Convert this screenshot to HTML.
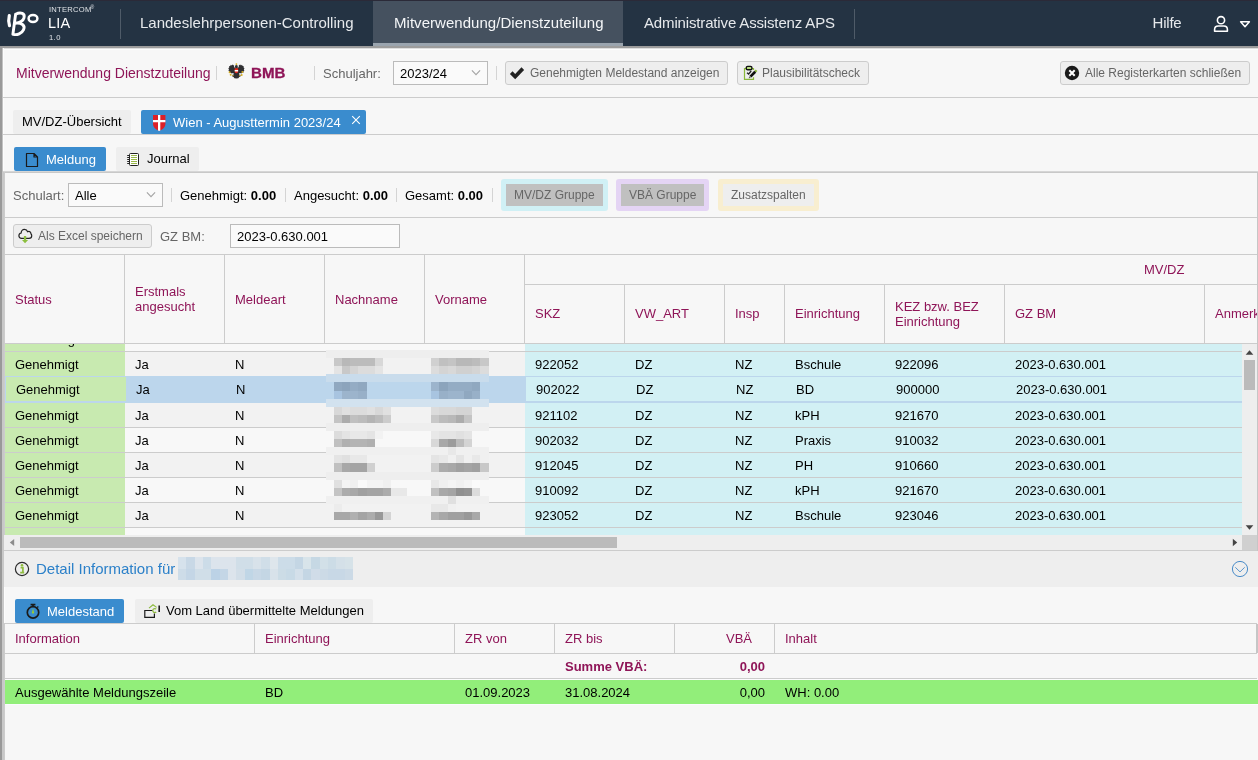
<!DOCTYPE html>
<html><head><meta charset="utf-8">
<style>
*{box-sizing:border-box;margin:0;padding:0}
html,body{width:1258px;height:760px;overflow:hidden;background:#f7f7f7;font-family:"Liberation Sans",sans-serif;font-size:13px;color:#000}
.a{position:absolute}
.t{position:absolute;white-space:nowrap;line-height:16px}
#hdr{left:0;top:0;width:1258px;height:46px;background:#243343}
.nav{color:#e6e9ec;font-size:15px;top:14px;line-height:18px}
.p{color:#8f1558}
.g{color:#666}
.btn{background:#eee;border:1px solid #ccc;border-radius:3px}
.bt{font-size:12px;color:#666;line-height:14px}
.sep{width:1px;background:#d4d4d4}
.hl{height:1px;background:#ccc;left:4px;width:1253px}
.vl{width:1px;background:#ccc}
.sel{background:#fafafa;border:1px solid #bbb}
.row{left:5px;width:1237px;height:25px}
.c{position:absolute;top:0;height:100%;white-space:nowrap;line-height:24px;font-size:13px}
.bl{position:absolute;filter:blur(1.5px)}
#root{position:absolute;left:0;top:0;width:1258px;height:760px;will-change:transform;overflow:hidden}
</style></head><body><div id="root">
<!-- HEADER -->
<div class="a" id="hdr"></div>
<div class="a" style="left:0;top:0;width:1258px;height:1px;background:#2b2a38"></div>
<div class="a" style="left:373px;top:1px;width:250px;height:45px;background:#45515f"></div>
<div class="a" style="left:373px;top:43px;width:250px;height:3px;background:#9aa4ae"></div>
<div class="a" style="left:0;top:46px;width:1258px;height:2px;background:#9c9c9c"></div>
<div class="a" style="left:2px;top:48px;width:1256px;height:1px;background:#dedede"></div><div class="a" style="left:3px;top:49px;width:1255px;height:1px;background:#fdfdfd"></div>
<div class="a" style="left:0;top:46px;width:2px;height:714px;background:#999"></div>
<div class="a" style="left:2px;top:48px;width:1px;height:712px;background:#c2c2c2"></div>
<div class="a" style="left:3px;top:48px;width:1px;height:123px;background:#fcfcfc"></div>
<div class="a" style="left:120px;top:9px;width:1px;height:30px;background:#4f5b68"></div>
<div class="a" style="left:854px;top:9px;width:1px;height:30px;background:#4f5b68"></div>
<!-- logo -->
<svg class="a" style="left:5px;top:8px" width="36" height="30" viewBox="0 0 36 30">
<g fill="none" stroke="#fff" stroke-linecap="round" stroke-linejoin="round">
<path d="M4.3 7.6 C3.5 10.8 3.5 14 4.5 17.6" stroke-width="3.2"/>
<path d="M10.6 6.2 L7.9 26.2 M10.6 6.2 C16 3.6 20.2 5.6 19 9.8 C18.2 12.6 14.8 14.6 10.4 15.2 C16.4 14.6 20.6 17.2 18.6 21.6 C16.9 25.4 12 27.6 7.9 26.2" stroke-width="2.9"/>
<ellipse cx="28" cy="10.5" rx="4.4" ry="3.5" stroke-width="2.5"/>
</g></svg>
<div class="t" style="left:49px;top:5px;font-size:7.6px;line-height:10px;color:#dfe3e7;letter-spacing:.25px">INTERCOM</div>
<div class="t" style="left:90.5px;top:4px;font-size:5px;line-height:6px;color:#dfe3e7">®</div>
<div class="t" style="left:48px;top:14px;font-size:14.5px;line-height:18px;color:#fff;letter-spacing:.2px">LIA</div>
<div class="t" style="left:49px;top:33px;font-size:7.6px;line-height:10px;color:#dfe3e7;letter-spacing:.4px">1.0</div>
<div class="t nav" id="n1" style="left:140px">Landeslehrpersonen-Controlling</div>
<div class="t nav" id="n2" style="left:394px;color:#f4f6f8;letter-spacing:.04px">Mitverwendung/Dienstzuteilung</div>
<div class="t nav" id="n3" style="left:644px;letter-spacing:-.15px">Administrative Assistenz APS</div>
<div class="t nav" id="n4" style="left:1152.5px;letter-spacing:-.2px">Hilfe</div>
<svg class="a" style="left:1213px;top:15px" width="16" height="18" viewBox="0 0 16 18"><g fill="none" stroke="#fff" stroke-width="1.6"><circle cx="8" cy="5.2" r="3.6"/><path d="M1.6 16.2 V14.5 C1.6 12.3 3.2 11 5.2 11 H10.8 C12.8 11 14.4 12.3 14.4 14.5 V16.2 Z" stroke-linejoin="round"/></g></svg>
<svg class="a" style="left:1239px;top:20px" width="12" height="9" viewBox="0 0 12 9"><path d="M1.6 1.8 H10.4 L6 6.8 Z" fill="none" stroke="#fff" stroke-width="1.5" stroke-linejoin="round"/></svg>

<!-- TOOLBAR 1 -->
<div class="t p" style="left:16px;top:64px;font-size:14px;line-height:18px">Mitverwendung Dienstzuteilung</div>
<div class="a sep" style="left:216px;top:66px;height:14px"></div>
<svg class="a" style="left:227.5px;top:62.5px;filter:blur(.4px)" width="17" height="16" viewBox="0 0 17 16">
<path d="M8.4 2 L9.6 2.4 L10.2 4 L11 2.2 L12.2 1.6 L13 2.4 L14 1.8 L14.6 3 L15.6 3 L15.6 4.4 L16.5 5.2 L15.8 6.4 L16.4 7.6 L15.4 8.4 L15.6 9.6 L14.2 9.8 L13.4 10.6 L12.4 10 L11.6 11.2 L12.8 12.4 L12.4 13.6 L11.2 14 L10.4 15.2 L8.4 15.6 L6.4 15.2 L5.6 14 L4.4 13.6 L4 12.4 L5.2 11.2 L4.4 10 L3.4 10.6 L2.6 9.8 L1.2 9.6 L1.4 8.4 L.4 7.6 L1 6.4 L.3 5.2 L1.2 4.4 L1.2 3 L2.2 3 L2.8 1.8 L3.8 2.4 L4.6 1.6 L5.8 2.2 L6.6 4 L7.2 2.4Z" fill="#303032"/>
<path d="M6.3 2.4 L6.8 4.6 M10.5 2.4 L10 4.6" stroke="#e4e4e4" stroke-width="1"/>
<path d="M5.4 10.2 L4.4 12.2 M11.4 10.2 L12.4 12.2" stroke="#d8dce4" stroke-width="1.2"/>
<path d="M6.7 5.2 H10.1 V8.4 C10.1 9.4 9.3 10 8.4 10.3 C7.5 10 6.7 9.4 6.7 8.4Z" fill="#ee2a1e"/>
<rect x="6.7" y="7" width="3.4" height="1.5" fill="#fff"/>
<circle cx="8.4" cy="1.1" r=".9" fill="#d4ac20"/>
<circle cx="1.6" cy="9.2" r="1" fill="#d4ac20"/><circle cx="14.4" cy="8.9" r="1" fill="#d4ac20"/>
<circle cx="2.7" cy="11.8" r="1" fill="#d4ac20"/><circle cx="13.7" cy="12" r="1" fill="#d4ac20"/>
<circle cx="5" cy="12.6" r=".7" fill="#d4ac20"/><circle cx="11.8" cy="12.6" r=".7" fill="#d4ac20"/>
</svg>
<div class="t p" id="bmb" style="left:251px;top:64px;font-size:14px;line-height:18px;font-weight:bold;transform-origin:0 50%;transform:scaleX(1.08);-webkit-text-stroke:.3px #8f1558">BMB</div>
<div class="a sep" style="left:314px;top:66px;height:14px"></div>
<div class="t g" style="left:323px;top:66px;font-size:13px">Schuljahr:</div>
<div class="a sel" style="left:393px;top:61px;width:95px;height:24px"></div>
<div class="t" style="left:400px;top:66px;font-size:13px">2023/24</div>
<svg class="a" style="left:470px;top:68px" width="12" height="8" viewBox="0 0 12 8"><path d="M1.9 2.3 L6 6.6 L10.1 2.3" fill="none" stroke="#a4a4a4" stroke-width="1.1"/></svg>
<div class="a sep" style="left:496px;top:66px;height:14px"></div>
<div class="a btn" style="left:505px;top:61px;width:223px;height:24px"></div>
<svg class="a" style="left:509px;top:66px" width="16" height="14" viewBox="0 0 16 14"><path d="M.9 7.9 L3.5 5.3 L6.2 8 L12.5 1.3 L15.1 3.9 L6.2 13.3 Z" fill="#222"/></svg>
<div class="t bt" style="left:530px;top:66px">Genehmigten Meldestand anzeigen</div>
<div class="a btn" style="left:737px;top:61px;width:132px;height:24px"></div>
<svg class="a" style="left:743px;top:65px" width="15" height="16" viewBox="0 0 15 16">
<path d="M3.4 3.6 H1.5 V14.4 H10.5 V12.2 M8.6 3.6 H10.5 V5" fill="none" stroke="#8ab83a" stroke-width="1.2"/>
<rect x="3.3" y="1.4" width="5.6" height="3.3" rx="1.3" fill="#b8dc80" stroke="#111" stroke-width="1.4"/>
<path d="M4 7.7 L5.6 9 L8.2 6" fill="none" stroke="#222" stroke-width="1.3"/>
<path d="M12 6.9 L13.6 5.3" stroke="#8ab83a" stroke-width="2.2"/>
<path d="M7.4 11.6 L12.2 6.8" stroke="#111" stroke-width="2.7"/>
<path d="M5.8 13.2 L6.2 11.2 L7.8 12.8Z" fill="#111"/><circle cx="6.9" cy="12.1" r=".6" fill="#ddd"/>
</svg>
<div class="t bt" style="left:762px;top:66px">Plausibilitätscheck</div>
<div class="a btn" style="left:1060px;top:61px;width:190px;height:24px"></div>
<svg class="a" style="left:1064px;top:65px" width="16" height="16" viewBox="0 0 16 16"><circle cx="8" cy="8" r="7.2" fill="#1a1a1a"/><path d="M5.3 5.3 L10.7 10.7 M10.7 5.3 L5.3 10.7" stroke="#fff" stroke-width="2" stroke-linecap="butt"/></svg>
<div class="t bt" style="left:1085px;top:66px">Alle Registerkarten schließen</div>
<div class="a" style="left:3px;top:97px;width:1255px;height:1px;background:#ccc"></div>

<!-- TABS 1 -->
<div class="a" style="left:13px;top:110px;width:118px;height:24px;background:#eee;border-radius:2px"></div>
<div class="t" style="left:22px;top:114px;font-size:13px">MV/DZ-Übersicht</div>
<div class="a" style="left:141px;top:110px;width:225px;height:24px;background:#3a8cce;border-radius:2px"></div>
<svg class="a" style="left:152px;top:114px" width="14" height="18" viewBox="0 0 14 18"><path d="M1 1 H13.4 V9.5 C13.4 13.5 10.5 15.6 7.2 16.9 C3.9 15.6 1 13.5 1 9.5Z" fill="#dc2028"/><path d="M6 1 H8.3 V16.4 L7.2 16.9 L6 16.4Z M1 5.9 H13.4 V8.3 H1Z" fill="#fff"/></svg>
<div class="t" style="left:173px;top:115px;font-size:13px;color:#fff">Wien - Augusttermin 2023/24</div>
<svg class="a" style="left:351px;top:115px" width="10" height="10" viewBox="0 0 10 10"><path d="M1.2 1.2 L8.8 8.8 M8.8 1.2 L1.2 8.8" stroke="#fff" stroke-width="1.1"/></svg>
<div class="a" style="left:3px;top:134px;width:1255px;height:1px;background:#ccc"></div>

<!-- TABS 2 -->
<div class="a" style="left:14px;top:147px;width:92px;height:24px;background:#3a8cce;border-radius:2px"></div>
<svg class="a" style="left:25px;top:152px" width="14" height="16" viewBox="0 0 14 16"><path d="M1.5 1.5 H9 L12.5 5 V14.5 H1.5 Z M9 1.5 V5 H12.5" fill="none" stroke="#1a1a1a" stroke-width="1.2" stroke-linejoin="round"/></svg>
<div class="t" style="left:46px;top:152px;font-size:13px;color:#fff">Meldung</div>
<div class="a" style="left:116px;top:147px;width:83px;height:24px;background:#eee;border-radius:2px"></div>
<svg class="a" style="left:126px;top:152px" width="14" height="15" viewBox="0 0 14 15"><rect x="3.5" y="1.5" width="9" height="12" rx="1" fill="#fff" stroke="#222" stroke-width="1"/><path d="M5 3.5 H11 M5 5.5 H11 M5 7.5 H11 M5 9.5 H11 M5 11.5 H11" stroke="#9ab84a" stroke-width="1"/><path d="M1.2 3.5 H4 M1.2 5.5 H4 M1.2 7.5 H4 M1.2 9.5 H4 M1.2 11.5 H4" stroke="#222" stroke-width="1"/></svg>
<div class="t" style="left:147px;top:151px;font-size:13px">Journal</div>
<div class="a" style="left:3px;top:171px;width:1255px;height:1px;background:#d6d6d6"></div><div class="a" style="left:3px;top:172px;width:1255px;height:1px;background:#c8c8c8"></div>
<div class="a" style="left:2px;top:172px;width:2px;height:588px;background:#c8c8c8"></div><div class="a" style="left:4px;top:172px;width:1px;height:363px;background:#ccc"></div><div class="a" style="left:4px;top:587px;width:1px;height:36px;background:#fcfcfc"></div><div class="a" style="left:4px;top:623px;width:1px;height:137px;background:#ccc"></div>

<!-- FILTER ROW -->
<div class="t g" style="left:13px;top:188px">Schulart:</div>
<div class="a sel" style="left:68px;top:183px;width:95px;height:24px"></div>
<div class="t" style="left:75px;top:188px">Alle</div>
<svg class="a" style="left:145px;top:190px" width="12" height="8" viewBox="0 0 12 8"><path d="M1.9 2.3 L6 6.6 L10.1 2.3" fill="none" stroke="#a4a4a4" stroke-width="1.1"/></svg>
<div class="a sep" style="left:171px;top:188px;height:14px"></div>
<div class="t" style="left:180px;top:188px">Genehmigt: <b>0.00</b></div>
<div class="a sep" style="left:285px;top:188px;height:14px"></div>
<div class="t" style="left:294px;top:188px">Angesucht: <b>0.00</b></div>
<div class="a sep" style="left:396px;top:188px;height:14px"></div>
<div class="t" style="left:405px;top:188px">Gesamt: <b>0.00</b></div>
<div class="a sep" style="left:492px;top:188px;height:14px"></div>
<div class="a" style="left:501px;top:179px;width:107px;height:32px;background:#c0c0c0;border:5px solid #d0f0f5;border-radius:3px"></div>
<div class="t bt" style="left:514px;top:188px">MV/DZ Gruppe</div>
<div class="a" style="left:616px;top:179px;width:93px;height:32px;background:#c0c0c0;border:5px solid #e4d4f4;border-radius:3px"></div>
<div class="t bt" style="left:629px;top:188px">VBÄ Gruppe</div>
<div class="a" style="left:718px;top:179px;width:101px;height:32px;background:#eee;border:5px solid #f8eed0;border-radius:3px"></div>
<div class="t bt" style="left:731px;top:188px">Zusatzspalten</div>
<div class="a hl" style="top:217px"></div>

<!-- EXCEL ROW -->
<div class="a btn" style="left:13px;top:224px;width:139px;height:24px"></div>
<svg class="a" style="left:17px;top:228px" width="17" height="16" viewBox="0 0 17 16"><path d="M4 10.5 C2.2 10.5 1.1 9.2 1.1 7.7 C1.1 6.1 2.2 5 3.6 4.8 C3.6 2.6 5.2 1 7.2 1 C8.9 1 10.2 2 10.7 3.4 C11.1 3.2 11.5 3.1 11.9 3.1 C13.4 3.1 14.4 4.2 14.3 5.5 C14.9 6 15.2 6.8 15.2 7.7 C15.2 9.3 13.9 10.5 12.2 10.5 Z" fill="none" stroke="#222" stroke-width="1.3" transform="translate(.9 .45) scale(.91 .95)"/><path d="M6.9 7.9 H9.2 V11.9 H11.1 L8.05 15.2 L5 11.9 H6.9Z" fill="#8cbf3f"/></svg>
<div class="t bt" style="left:38px;top:229px">Als Excel speichern</div>
<div class="t g" style="left:160px;top:229px">GZ BM:</div>
<div class="a sel" style="left:230px;top:224px;width:170px;height:24px"></div>
<div class="t" style="left:237px;top:229px">2023-0.630.001</div>

<!-- GRID HEADER -->
<div class="a hl" style="top:254px"></div>
<div class="a vl" style="left:124px;top:255px;height:88px"></div>
<div class="a vl" style="left:224px;top:255px;height:88px"></div>
<div class="a vl" style="left:324px;top:255px;height:88px"></div>
<div class="a vl" style="left:424px;top:255px;height:88px"></div>
<div class="a vl" style="left:524px;top:255px;height:88px"></div>
<div class="a" style="left:525px;top:284px;width:733px;height:1px;background:#ccc"></div>
<div class="a vl" style="left:624px;top:285px;height:58px"></div>
<div class="a vl" style="left:724px;top:285px;height:58px"></div>
<div class="a vl" style="left:784px;top:285px;height:58px"></div>
<div class="a vl" style="left:884px;top:285px;height:58px"></div>
<div class="a vl" style="left:1004px;top:285px;height:58px"></div>
<div class="a vl" style="left:1204px;top:285px;height:58px"></div>

<div class="t p" style="left:15px;top:292px">Status</div>
<div class="t p" style="left:135px;top:284px;line-height:15px">Erstmals<br>angesucht</div>
<div class="t p" style="left:235px;top:292px">Meldeart</div>
<div class="t p" style="left:335px;top:292px">Nachname</div>
<div class="t p" style="left:435px;top:292px">Vorname</div>
<div class="t p" style="left:1144px;top:262px">MV/DZ</div>
<div class="t p" style="left:535px;top:306px">SKZ</div>
<div class="t p" style="left:635px;top:306px">VW_ART</div>
<div class="t p" style="left:735px;top:306px">Insp</div>
<div class="t p" style="left:795px;top:306px">Einrichtung</div>
<div class="t p" style="left:895px;top:299px;line-height:15px">KEZ bzw. BEZ<br>Einrichtung</div>
<div class="t p" style="left:1015px;top:306px">GZ BM</div>
<div class="t p" style="left:1215px;top:306px;width:43px;overflow:hidden">Anmerkung</div>
<div class="a" style="left:4px;top:343px;width:1253px;height:1px;background:#ccc"></div>

<!-- GRID BODY -->
<div id="grid"><div class="a" style="left:5px;top:344px;width:120px;height:191px;background:#c8eab0"></div>
<div class="a" style="left:125px;top:344px;width:400px;height:191px;background:#f8f8f8"></div>
<div class="a" style="left:525px;top:344px;width:717px;height:191px;background:#d2f0f4"></div>
<div class="a" style="left:5px;top:344px;width:120px;height:7px;overflow:hidden"><div class="t" style="left:10px;top:-16px;line-height:24px">Genehmigt</div></div>
<div class="a" style="left:125px;top:352px;width:400px;height:24px;background:#f2f2f2"></div>
<div class="t" style="left:15px;top:353px;line-height:24px">Genehmigt</div>
<div class="t" style="left:135px;top:353px;line-height:24px">Ja</div>
<div class="t" style="left:235px;top:353px;line-height:24px">N</div>
<div class="t" style="left:535px;top:353px;line-height:24px">922052</div>
<div class="t" style="left:635px;top:353px;line-height:24px">DZ</div>
<div class="t" style="left:735px;top:353px;line-height:24px">NZ</div>
<div class="t" style="left:795px;top:353px;line-height:24px">Bschule</div>
<div class="t" style="left:895px;top:353px;line-height:24px">922096</div>
<div class="t" style="left:1015px;top:353px;line-height:24px">2023-0.630.001</div>
<div class="a" style="left:5px;top:376px;width:1237px;height:27px;background:#bcd6ec"></div>
<div class="a" style="left:6px;top:377px;width:120px;height:24px;background:#c8eab0"></div>
<div class="a" style="left:526px;top:377px;width:716px;height:24px;background:#d2f0f4"></div>
<div class="t" style="left:16px;top:377px;line-height:25px">Genehmigt</div>
<div class="t" style="left:136px;top:377px;line-height:25px">Ja</div>
<div class="t" style="left:236px;top:377px;line-height:25px">N</div>
<div class="t" style="left:536px;top:377px;line-height:25px">902022</div>
<div class="t" style="left:636px;top:377px;line-height:25px">DZ</div>
<div class="t" style="left:736px;top:377px;line-height:25px">NZ</div>
<div class="t" style="left:796px;top:377px;line-height:25px">BD</div>
<div class="t" style="left:896px;top:377px;line-height:25px">900000</div>
<div class="t" style="left:1016px;top:377px;line-height:25px">2023-0.630.001</div>
<div class="a" style="left:125px;top:403px;width:400px;height:24px;background:#f2f2f2"></div>
<div class="t" style="left:15px;top:404px;line-height:24px">Genehmigt</div>
<div class="t" style="left:135px;top:404px;line-height:24px">Ja</div>
<div class="t" style="left:235px;top:404px;line-height:24px">N</div>
<div class="t" style="left:535px;top:404px;line-height:24px">921102</div>
<div class="t" style="left:635px;top:404px;line-height:24px">DZ</div>
<div class="t" style="left:735px;top:404px;line-height:24px">NZ</div>
<div class="t" style="left:795px;top:404px;line-height:24px">kPH</div>
<div class="t" style="left:895px;top:404px;line-height:24px">921670</div>
<div class="t" style="left:1015px;top:404px;line-height:24px">2023-0.630.001</div>
<div class="t" style="left:15px;top:429px;line-height:24px">Genehmigt</div>
<div class="t" style="left:135px;top:429px;line-height:24px">Ja</div>
<div class="t" style="left:235px;top:429px;line-height:24px">N</div>
<div class="t" style="left:535px;top:429px;line-height:24px">902032</div>
<div class="t" style="left:635px;top:429px;line-height:24px">DZ</div>
<div class="t" style="left:735px;top:429px;line-height:24px">NZ</div>
<div class="t" style="left:795px;top:429px;line-height:24px">Praxis</div>
<div class="t" style="left:895px;top:429px;line-height:24px">910032</div>
<div class="t" style="left:1015px;top:429px;line-height:24px">2023-0.630.001</div>
<div class="a" style="left:125px;top:453px;width:400px;height:24px;background:#f2f2f2"></div>
<div class="t" style="left:15px;top:454px;line-height:24px">Genehmigt</div>
<div class="t" style="left:135px;top:454px;line-height:24px">Ja</div>
<div class="t" style="left:235px;top:454px;line-height:24px">N</div>
<div class="t" style="left:535px;top:454px;line-height:24px">912045</div>
<div class="t" style="left:635px;top:454px;line-height:24px">DZ</div>
<div class="t" style="left:735px;top:454px;line-height:24px">NZ</div>
<div class="t" style="left:795px;top:454px;line-height:24px">PH</div>
<div class="t" style="left:895px;top:454px;line-height:24px">910660</div>
<div class="t" style="left:1015px;top:454px;line-height:24px">2023-0.630.001</div>
<div class="t" style="left:15px;top:479px;line-height:24px">Genehmigt</div>
<div class="t" style="left:135px;top:479px;line-height:24px">Ja</div>
<div class="t" style="left:235px;top:479px;line-height:24px">N</div>
<div class="t" style="left:535px;top:479px;line-height:24px">910092</div>
<div class="t" style="left:635px;top:479px;line-height:24px">DZ</div>
<div class="t" style="left:735px;top:479px;line-height:24px">NZ</div>
<div class="t" style="left:795px;top:479px;line-height:24px">kPH</div>
<div class="t" style="left:895px;top:479px;line-height:24px">921670</div>
<div class="t" style="left:1015px;top:479px;line-height:24px">2023-0.630.001</div>
<div class="a" style="left:125px;top:503px;width:400px;height:24px;background:#f2f2f2"></div>
<div class="t" style="left:15px;top:504px;line-height:24px">Genehmigt</div>
<div class="t" style="left:135px;top:504px;line-height:24px">Ja</div>
<div class="t" style="left:235px;top:504px;line-height:24px">N</div>
<div class="t" style="left:535px;top:504px;line-height:24px">923052</div>
<div class="t" style="left:635px;top:504px;line-height:24px">DZ</div>
<div class="t" style="left:735px;top:504px;line-height:24px">NZ</div>
<div class="t" style="left:795px;top:504px;line-height:24px">Bschule</div>
<div class="t" style="left:895px;top:504px;line-height:24px">923046</div>
<div class="t" style="left:1015px;top:504px;line-height:24px">2023-0.630.001</div>
<div class="a" style="left:5px;top:351px;width:1237px;height:1px;background:#ccc"></div>
<div class="a" style="left:5px;top:427px;width:1237px;height:1px;background:#ccc"></div>
<div class="a" style="left:5px;top:452px;width:1237px;height:1px;background:#ccc"></div>
<div class="a" style="left:5px;top:477px;width:1237px;height:1px;background:#ccc"></div>
<div class="a" style="left:5px;top:502px;width:1237px;height:1px;background:#ccc"></div>
<div class="a" style="left:5px;top:527px;width:1237px;height:1px;background:#ccc"></div>
<div class="a" style="left:1242px;top:344px;width:16px;height:191px;background:#eee"></div>
<div class="a" style="left:1244px;top:360px;width:11px;height:30px;background:#bbb"></div>
<svg class="a" style="left:1245px;top:349px" width="9" height="7" viewBox="0 0 9 7"><path d="M.7 5.8 H8.3 L4.5 1.3Z" fill="#444"/></svg>
<svg class="a" style="left:1245px;top:524px" width="9" height="7" viewBox="0 0 9 7"><path d="M.7 1.2 H8.3 L4.5 5.7Z" fill="#444"/></svg>
<svg class="a" style="left:326px;top:349.9px" width="163.0" height="170.1" shape-rendering="crispEdges"><rect x="0.0" y="0.0" width="163.2" height="8.3" fill="#eeeeee"/><rect x="0.0" y="8.1" width="8.3" height="8.3" fill="#f2f2f2"/><rect x="8.1" y="8.1" width="8.3" height="8.3" fill="#c8c8c8"/><rect x="16.2" y="8.1" width="8.3" height="8.3" fill="#b8b8b8"/><rect x="24.3" y="8.1" width="24.5" height="8.3" fill="#bcbcbc"/><rect x="48.6" y="8.1" width="8.3" height="8.3" fill="#d8d8d8"/><rect x="56.7" y="8.1" width="48.8" height="8.3" fill="#f2f2f2"/><rect x="105.3" y="8.1" width="8.3" height="8.3" fill="#d0d0d0"/><rect x="113.4" y="8.1" width="8.3" height="8.3" fill="#c0c0c0"/><rect x="121.5" y="8.1" width="8.3" height="8.3" fill="#c4c4c4"/><rect x="129.6" y="8.1" width="16.4" height="8.3" fill="#b8b8b8"/><rect x="145.8" y="8.1" width="8.3" height="8.3" fill="#bcbcbc"/><rect x="153.9" y="8.1" width="9.3" height="8.3" fill="#c8c8c8"/><rect x="0.0" y="16.2" width="8.3" height="8.3" fill="#f2f2f2"/><rect x="8.1" y="16.2" width="8.3" height="8.3" fill="#e4e4e4"/><rect x="16.2" y="16.2" width="8.3" height="8.3" fill="#c8c8c8"/><rect x="24.3" y="16.2" width="8.3" height="8.3" fill="#d4d4d4"/><rect x="32.4" y="16.2" width="16.4" height="8.3" fill="#dcdcdc"/><rect x="48.6" y="16.2" width="8.3" height="8.3" fill="#e4e4e4"/><rect x="56.7" y="16.2" width="48.8" height="8.3" fill="#f2f2f2"/><rect x="105.3" y="16.2" width="8.3" height="8.3" fill="#dcdcdc"/><rect x="113.4" y="16.2" width="8.3" height="8.3" fill="#d4d4d4"/><rect x="121.5" y="16.2" width="8.3" height="8.3" fill="#d8d8d8"/><rect x="129.6" y="16.2" width="16.4" height="8.3" fill="#d0d0d0"/><rect x="145.8" y="16.2" width="8.3" height="8.3" fill="#d4d4d4"/><rect x="153.9" y="16.2" width="9.3" height="8.3" fill="#dcdcdc"/><rect x="0.0" y="24.3" width="163.2" height="8.3" fill="#c9dcec"/><rect x="0.0" y="32.4" width="8.3" height="8.3" fill="#bcd6ec"/><rect x="8.1" y="32.4" width="8.3" height="8.3" fill="#90a8c0"/><rect x="16.2" y="32.4" width="8.3" height="8.3" fill="#8ca4bc"/><rect x="24.3" y="32.4" width="8.3" height="8.3" fill="#94acc4"/><rect x="32.4" y="32.4" width="8.3" height="8.3" fill="#90a8c0"/><rect x="40.5" y="32.4" width="65.0" height="8.3" fill="#bcd6ec"/><rect x="105.3" y="32.4" width="8.3" height="8.3" fill="#9cb4cc"/><rect x="113.4" y="32.4" width="8.3" height="8.3" fill="#8ca4bc"/><rect x="121.5" y="32.4" width="24.5" height="8.3" fill="#94acc4"/><rect x="145.8" y="32.4" width="8.3" height="8.3" fill="#90a8c0"/><rect x="153.9" y="32.4" width="9.3" height="8.3" fill="#bcd6ec"/><rect x="0.0" y="40.5" width="8.3" height="8.3" fill="#bcd6ec"/><rect x="8.1" y="40.5" width="8.3" height="8.3" fill="#a8c4e0"/><rect x="16.2" y="40.5" width="16.4" height="8.3" fill="#9cb4cc"/><rect x="32.4" y="40.5" width="8.3" height="8.3" fill="#98b0c8"/><rect x="40.5" y="40.5" width="65.0" height="8.3" fill="#bcd6ec"/><rect x="105.3" y="40.5" width="8.3" height="8.3" fill="#a8c4e0"/><rect x="113.4" y="40.5" width="8.3" height="8.3" fill="#98b0c8"/><rect x="121.5" y="40.5" width="16.4" height="8.3" fill="#9cb4cc"/><rect x="137.7" y="40.5" width="8.3" height="8.3" fill="#90a8c0"/><rect x="145.8" y="40.5" width="8.3" height="8.3" fill="#98b0c8"/><rect x="153.9" y="40.5" width="9.3" height="8.3" fill="#bcd6ec"/><rect x="0.0" y="48.6" width="163.2" height="8.3" fill="#d2e2ef"/><rect x="0.0" y="56.7" width="8.3" height="8.3" fill="#f2f2f2"/><rect x="8.1" y="56.7" width="8.3" height="8.3" fill="#d8d8d8"/><rect x="16.2" y="56.7" width="8.3" height="8.3" fill="#e0e0e0"/><rect x="24.3" y="56.7" width="16.4" height="8.3" fill="#dcdcdc"/><rect x="40.5" y="56.7" width="8.3" height="8.3" fill="#e0e0e0"/><rect x="48.6" y="56.7" width="8.3" height="8.3" fill="#d8d8d8"/><rect x="56.7" y="56.7" width="8.3" height="8.3" fill="#e0e0e0"/><rect x="64.8" y="56.7" width="40.7" height="8.3" fill="#f2f2f2"/><rect x="105.3" y="56.7" width="8.3" height="8.3" fill="#dcdcdc"/><rect x="113.4" y="56.7" width="16.4" height="8.3" fill="#d8d8d8"/><rect x="129.6" y="56.7" width="16.4" height="8.3" fill="#d4d4d4"/><rect x="145.8" y="56.7" width="17.4" height="8.3" fill="#f2f2f2"/><rect x="0.0" y="64.8" width="8.3" height="8.3" fill="#f2f2f2"/><rect x="8.1" y="64.8" width="8.3" height="8.3" fill="#c4c4c4"/><rect x="16.2" y="64.8" width="8.3" height="8.3" fill="#acacac"/><rect x="24.3" y="64.8" width="8.3" height="8.3" fill="#c0c0c0"/><rect x="32.4" y="64.8" width="8.3" height="8.3" fill="#bcbcbc"/><rect x="40.5" y="64.8" width="8.3" height="8.3" fill="#b4b4b4"/><rect x="48.6" y="64.8" width="8.3" height="8.3" fill="#bcbcbc"/><rect x="56.7" y="64.8" width="8.3" height="8.3" fill="#cccccc"/><rect x="64.8" y="64.8" width="40.7" height="8.3" fill="#f2f2f2"/><rect x="105.3" y="64.8" width="8.3" height="8.3" fill="#c8c8c8"/><rect x="113.4" y="64.8" width="8.3" height="8.3" fill="#bcbcbc"/><rect x="121.5" y="64.8" width="8.3" height="8.3" fill="#b8b8b8"/><rect x="129.6" y="64.8" width="8.3" height="8.3" fill="#acacac"/><rect x="137.7" y="64.8" width="8.3" height="8.3" fill="#c4c4c4"/><rect x="145.8" y="64.8" width="17.4" height="8.3" fill="#f2f2f2"/><rect x="0.0" y="72.9" width="163.2" height="8.3" fill="#eeeeee"/><rect x="0.0" y="81.0" width="8.3" height="8.3" fill="#f8f8f8"/><rect x="8.1" y="81.0" width="8.3" height="8.3" fill="#dcdcdc"/><rect x="16.2" y="81.0" width="8.3" height="8.3" fill="#e4e4e4"/><rect x="24.3" y="81.0" width="16.4" height="8.3" fill="#e8e8e8"/><rect x="40.5" y="81.0" width="8.3" height="8.3" fill="#e4e4e4"/><rect x="48.6" y="81.0" width="8.3" height="8.3" fill="#f2f2f2"/><rect x="56.7" y="81.0" width="48.8" height="8.3" fill="#f8f8f8"/><rect x="105.3" y="81.0" width="8.3" height="8.3" fill="#e8e8e8"/><rect x="113.4" y="81.0" width="16.4" height="8.3" fill="#e4e4e4"/><rect x="129.6" y="81.0" width="8.3" height="8.3" fill="#e0e0e0"/><rect x="137.7" y="81.0" width="8.3" height="8.3" fill="#e4e4e4"/><rect x="145.8" y="81.0" width="17.4" height="8.3" fill="#f8f8f8"/><rect x="0.0" y="89.1" width="8.3" height="8.3" fill="#f8f8f8"/><rect x="8.1" y="89.1" width="8.3" height="8.3" fill="#c0c0c0"/><rect x="16.2" y="89.1" width="8.3" height="8.3" fill="#b0b0b0"/><rect x="24.3" y="89.1" width="16.4" height="8.3" fill="#b4b4b4"/><rect x="40.5" y="89.1" width="8.3" height="8.3" fill="#b0b0b0"/><rect x="48.6" y="89.1" width="56.9" height="8.3" fill="#f8f8f8"/><rect x="105.3" y="89.1" width="8.3" height="8.3" fill="#d8d8d8"/><rect x="113.4" y="89.1" width="8.3" height="8.3" fill="#a8a8a8"/><rect x="121.5" y="89.1" width="8.3" height="8.3" fill="#9c9c9c"/><rect x="129.6" y="89.1" width="8.3" height="8.3" fill="#bcbcbc"/><rect x="137.7" y="89.1" width="8.3" height="8.3" fill="#d4d4d4"/><rect x="145.8" y="89.1" width="17.4" height="8.3" fill="#f8f8f8"/><rect x="0.0" y="97.2" width="121.7" height="8.3" fill="#f0f0f0"/><rect x="121.5" y="97.2" width="8.3" height="8.3" fill="#e8e8e8"/><rect x="129.6" y="97.2" width="33.6" height="8.3" fill="#f0f0f0"/><rect x="0.0" y="105.3" width="8.3" height="8.3" fill="#f2f2f2"/><rect x="8.1" y="105.3" width="8.3" height="8.3" fill="#e4e4e4"/><rect x="16.2" y="105.3" width="8.3" height="8.3" fill="#e0e0e0"/><rect x="24.3" y="105.3" width="16.4" height="8.3" fill="#e8e8e8"/><rect x="40.5" y="105.3" width="65.0" height="8.3" fill="#f2f2f2"/><rect x="105.3" y="105.3" width="8.3" height="8.3" fill="#e4e4e4"/><rect x="113.4" y="105.3" width="8.3" height="8.3" fill="#e8e8e8"/><rect x="121.5" y="105.3" width="8.3" height="8.3" fill="#f0f0f0"/><rect x="129.6" y="105.3" width="8.3" height="8.3" fill="#e4e4e4"/><rect x="137.7" y="105.3" width="8.3" height="8.3" fill="#f0f0f0"/><rect x="145.8" y="105.3" width="8.3" height="8.3" fill="#e8e8e8"/><rect x="153.9" y="105.3" width="9.3" height="8.3" fill="#f0f0f0"/><rect x="0.0" y="113.4" width="8.3" height="8.3" fill="#f2f2f2"/><rect x="8.1" y="113.4" width="8.3" height="8.3" fill="#c0c0c0"/><rect x="16.2" y="113.4" width="8.3" height="8.3" fill="#a8a8a8"/><rect x="24.3" y="113.4" width="16.4" height="8.3" fill="#a4a4a4"/><rect x="40.5" y="113.4" width="8.3" height="8.3" fill="#d0d0d0"/><rect x="48.6" y="113.4" width="56.9" height="8.3" fill="#f2f2f2"/><rect x="105.3" y="113.4" width="8.3" height="8.3" fill="#cccccc"/><rect x="113.4" y="113.4" width="8.3" height="8.3" fill="#acacac"/><rect x="121.5" y="113.4" width="8.3" height="8.3" fill="#a8a8a8"/><rect x="129.6" y="113.4" width="8.3" height="8.3" fill="#a0a0a0"/><rect x="137.7" y="113.4" width="8.3" height="8.3" fill="#a4a4a4"/><rect x="145.8" y="113.4" width="8.3" height="8.3" fill="#a0a0a0"/><rect x="153.9" y="113.4" width="9.3" height="8.3" fill="#c8c8c8"/><rect x="0.0" y="121.5" width="163.2" height="8.3" fill="#eeeeee"/><rect x="0.0" y="129.6" width="8.3" height="8.3" fill="#f8f8f8"/><rect x="8.1" y="129.6" width="8.3" height="8.3" fill="#e0e0e0"/><rect x="16.2" y="129.6" width="8.3" height="8.3" fill="#f4f4f4"/><rect x="24.3" y="129.6" width="8.3" height="8.3" fill="#f0f0f0"/><rect x="32.4" y="129.6" width="8.3" height="8.3" fill="#fafafa"/><rect x="40.5" y="129.6" width="16.4" height="8.3" fill="#f4f4f4"/><rect x="56.7" y="129.6" width="8.3" height="8.3" fill="#f0f0f0"/><rect x="64.8" y="129.6" width="40.7" height="8.3" fill="#f8f8f8"/><rect x="105.3" y="129.6" width="8.3" height="8.3" fill="#e8e8e8"/><rect x="113.4" y="129.6" width="8.3" height="8.3" fill="#f0f0f0"/><rect x="121.5" y="129.6" width="8.3" height="8.3" fill="#f4f4f4"/><rect x="129.6" y="129.6" width="8.3" height="8.3" fill="#f0f0f0"/><rect x="137.7" y="129.6" width="8.3" height="8.3" fill="#f4f4f4"/><rect x="145.8" y="129.6" width="8.3" height="8.3" fill="#fafafa"/><rect x="153.9" y="129.6" width="9.3" height="8.3" fill="#f8f8f8"/><rect x="0.0" y="137.7" width="8.3" height="8.3" fill="#f8f8f8"/><rect x="8.1" y="137.7" width="8.3" height="8.3" fill="#c4c4c4"/><rect x="16.2" y="137.7" width="8.3" height="8.3" fill="#acacac"/><rect x="24.3" y="137.7" width="8.3" height="8.3" fill="#a8a8a8"/><rect x="32.4" y="137.7" width="8.3" height="8.3" fill="#a0a0a0"/><rect x="40.5" y="137.7" width="16.4" height="8.3" fill="#a4a4a4"/><rect x="56.7" y="137.7" width="8.3" height="8.3" fill="#acacac"/><rect x="64.8" y="137.7" width="16.4" height="8.3" fill="#e8e8e8"/><rect x="81.0" y="137.7" width="24.5" height="8.3" fill="#f8f8f8"/><rect x="105.3" y="137.7" width="8.3" height="8.3" fill="#c0c0c0"/><rect x="113.4" y="137.7" width="8.3" height="8.3" fill="#a8a8a8"/><rect x="121.5" y="137.7" width="8.3" height="8.3" fill="#a4a4a4"/><rect x="129.6" y="137.7" width="8.3" height="8.3" fill="#909090"/><rect x="137.7" y="137.7" width="8.3" height="8.3" fill="#949494"/><rect x="145.8" y="137.7" width="8.3" height="8.3" fill="#dcdcdc"/><rect x="153.9" y="137.7" width="9.3" height="8.3" fill="#f8f8f8"/><rect x="0.0" y="145.8" width="121.7" height="8.3" fill="#f0f0f0"/><rect x="121.5" y="145.8" width="8.3" height="8.3" fill="#e0e0e0"/><rect x="129.6" y="145.8" width="33.6" height="8.3" fill="#f0f0f0"/><rect x="0.0" y="153.9" width="8.3" height="8.3" fill="#f2f2f2"/><rect x="8.1" y="153.9" width="8.3" height="8.3" fill="#ececec"/><rect x="16.2" y="153.9" width="89.3" height="8.3" fill="#f2f2f2"/><rect x="105.3" y="153.9" width="16.4" height="8.3" fill="#e8e8e8"/><rect x="121.5" y="153.9" width="8.3" height="8.3" fill="#f0f0f0"/><rect x="129.6" y="153.9" width="33.6" height="8.3" fill="#f2f2f2"/><rect x="0.0" y="162.0" width="8.3" height="8.3" fill="#f2f2f2"/><rect x="8.1" y="162.0" width="16.4" height="8.3" fill="#a8a8a8"/><rect x="24.3" y="162.0" width="8.3" height="8.3" fill="#b0b0b0"/><rect x="32.4" y="162.0" width="8.3" height="8.3" fill="#a4a4a4"/><rect x="40.5" y="162.0" width="8.3" height="8.3" fill="#acacac"/><rect x="48.6" y="162.0" width="8.3" height="8.3" fill="#989898"/><rect x="56.7" y="162.0" width="8.3" height="8.3" fill="#d4d4d4"/><rect x="64.8" y="162.0" width="40.7" height="8.3" fill="#f2f2f2"/><rect x="105.3" y="162.0" width="8.3" height="8.3" fill="#b4b4b4"/><rect x="113.4" y="162.0" width="8.3" height="8.3" fill="#a8a8a8"/><rect x="121.5" y="162.0" width="16.4" height="8.3" fill="#a0a0a0"/><rect x="137.7" y="162.0" width="8.3" height="8.3" fill="#989898"/><rect x="145.8" y="162.0" width="8.3" height="8.3" fill="#a8a8a8"/><rect x="153.9" y="162.0" width="9.3" height="8.3" fill="#f2f2f2"/></svg></div><!--/grid-->

<!-- H SCROLL -->
<div class="a" style="left:4px;top:535px;width:1238px;height:15px;background:#eee"></div>
<div class="a" style="left:20px;top:537px;width:597px;height:11px;background:#bbb"></div>
<svg class="a" style="left:8px;top:538px" width="8" height="9" viewBox="0 0 8 9"><path d="M6.2 .9 V8.1 L1.8 4.5Z" fill="#8c8c8c"/></svg>
<svg class="a" style="left:1230.6px;top:538.2px" width="8" height="9" viewBox="0 0 8 9"><path d="M1.8 .8 V8.2 L6.2 4.5Z" fill="#444"/></svg>
<div class="a" style="left:1242px;top:535px;width:16px;height:15px;background:#d0d0d0"></div>
<div class="a" style="left:4px;top:550px;width:1253px;height:1px;background:#ccc"></div>

<!-- DETAIL HEADER -->
<div class="a" style="left:4px;top:551px;width:1254px;height:36px;background:#eee"></div>
<svg class="a" style="left:14px;top:561px" width="16" height="16" viewBox="0 0 16 16"><circle cx="8" cy="8" r="6.6" fill="none" stroke="#2a2a2a" stroke-width="1.2"/><path d="M6.6 6.6 H8.9 V11.4 M6.2 11.6 H10.2" fill="none" stroke="#8fbc3f" stroke-width="1.7"/><circle cx="8" cy="4.2" r="1.25" fill="#8fbc3f"/></svg>
<div class="t" style="left:36px;top:560px;font-size:15px;line-height:18px;color:#2b80c9">Detail Information für</div>
<div id="blurname"><svg class="a" style="left:178px;top:557px" width="176" height="24" shape-rendering="crispEdges"><rect x="0.00" y="0" width="8.63" height="12.2" fill="#d6e2ec"/><rect x="8.33" y="0" width="8.63" height="12.2" fill="#c8d8e6"/><rect x="16.67" y="0" width="8.63" height="12.2" fill="#dce4ec"/><rect x="25.00" y="0" width="8.63" height="12.2" fill="#ccdce8"/><rect x="33.33" y="0" width="8.63" height="12.2" fill="#dce4ec"/><rect x="41.67" y="0" width="8.63" height="12.2" fill="#dce4ec"/><rect x="50.00" y="0" width="8.63" height="12.2" fill="#dce4ec"/><rect x="58.33" y="0" width="8.63" height="12.2" fill="#d0dee8"/><rect x="66.67" y="0" width="8.63" height="12.2" fill="#d0dee8"/><rect x="75.00" y="0" width="8.63" height="12.2" fill="#d8e2ea"/><rect x="83.33" y="0" width="8.63" height="12.2" fill="#d0dee8"/><rect x="91.67" y="0" width="8.63" height="12.2" fill="#dee6ec"/><rect x="100.00" y="0" width="8.63" height="12.2" fill="#ccdce8"/><rect x="108.33" y="0" width="8.63" height="12.2" fill="#ccdce8"/><rect x="116.67" y="0" width="8.63" height="12.2" fill="#c4d6e4"/><rect x="125.00" y="0" width="8.63" height="12.2" fill="#d8e4ea"/><rect x="133.33" y="0" width="8.63" height="12.2" fill="#c6d8e4"/><rect x="141.67" y="0" width="8.63" height="12.2" fill="#d2e0e8"/><rect x="150.00" y="0" width="8.63" height="12.2" fill="#ccdce6"/><rect x="158.33" y="0" width="8.63" height="12.2" fill="#d4e0e8"/><rect x="166.67" y="0" width="8.63" height="12.2" fill="#d6e2e8"/><rect x="0.00" y="12" width="8.63" height="11.2" fill="#cddce8"/><rect x="8.33" y="12" width="8.63" height="11.2" fill="#c4d6e6"/><rect x="16.67" y="12" width="8.63" height="11.2" fill="#d0dee8"/><rect x="25.00" y="12" width="8.63" height="11.2" fill="#d0dee8"/><rect x="33.33" y="12" width="8.63" height="11.2" fill="#bcd2e6"/><rect x="41.67" y="12" width="8.63" height="11.2" fill="#c4d6e6"/><rect x="50.00" y="12" width="8.63" height="11.2" fill="#dce4ec"/><rect x="58.33" y="12" width="8.63" height="11.2" fill="#d2dee8"/><rect x="66.67" y="12" width="8.63" height="11.2" fill="#c0d6e6"/><rect x="75.00" y="12" width="8.63" height="11.2" fill="#c8d8e6"/><rect x="83.33" y="12" width="8.63" height="11.2" fill="#c4d6e4"/><rect x="91.67" y="12" width="8.63" height="11.2" fill="#d8e2ea"/><rect x="100.00" y="12" width="8.63" height="11.2" fill="#ccdce6"/><rect x="108.33" y="12" width="8.63" height="11.2" fill="#c8dae6"/><rect x="116.67" y="12" width="8.63" height="11.2" fill="#d4e0ea"/><rect x="125.00" y="12" width="8.63" height="11.2" fill="#c4d6e4"/><rect x="133.33" y="12" width="8.63" height="11.2" fill="#d0dce8"/><rect x="141.67" y="12" width="8.63" height="11.2" fill="#ccdae6"/><rect x="150.00" y="12" width="8.63" height="11.2" fill="#c8d8e6"/><rect x="158.33" y="12" width="8.63" height="11.2" fill="#c8d8e6"/><rect x="166.67" y="12" width="8.63" height="11.2" fill="#ccdae6"/></svg></div><!--/bn-->
<svg class="a" style="left:1231px;top:560px" width="18" height="18" viewBox="0 0 18 18"><circle cx="9" cy="9" r="7.6" fill="none" stroke="#4a8cc8" stroke-width="1"/><path d="M4.3 7.3 L9 11.9 L13.7 7.3" fill="none" stroke="#4a8cc8" stroke-width=".9"/></svg>

<!-- DETAIL TABS -->
<div class="a" style="left:15px;top:599px;width:109px;height:24px;background:#3a8cce;border-radius:2px"></div>
<svg class="a" style="left:24.6px;top:602.3px" width="16" height="18" viewBox="0 0 16 18"><circle cx="8" cy="10.4" r="5.7" fill="none" stroke="#1a1a1a" stroke-width="1.7"/><path d="M5.6 2.6 H10.4 M8 2.6 V5" stroke="#1a1a1a" stroke-width="1.7"/><path d="M12.2 5.6 L13.3 4.6" stroke="#1a1a1a" stroke-width="1.3"/><path d="M8 6.2 L9.1 10.4 A1.1 1.2 0 0 1 6.9 10.4Z" fill="#9acd32"/></svg>
<div class="t" style="left:47px;top:604px;color:#fff">Meldestand</div>
<div class="a" style="left:135px;top:599px;width:238px;height:24px;background:#eee;border-radius:2px"></div>
<svg class="a" style="left:143px;top:603px" width="18" height="16" viewBox="0 0 18 16"><path d="M9.5 7.5 H1.8 V14.3 H11.4 V10.5" fill="none" stroke="#1a1a1a" stroke-width="1.2"/><path d="M6 5.2 L10 1.8 L13.6 4.4" fill="none" stroke="#8ab83a" stroke-width="1.1"/><path d="M13.2 6.2 A2 2 0 1 0 13.2 9" fill="none" stroke="#8ab83a" stroke-width="1.2"/><path d="M16.2 2.4 V9" stroke="#1a1a1a" stroke-width="1.6"/></svg>
<div class="t" style="left:166px;top:603px">Vom Land übermittelte Meldungen</div>

<!-- DETAIL TABLE -->
<div class="a" style="left:4px;top:623px;width:1253px;height:1px;background:#ccc"></div>

<div class="a vl" style="left:254px;top:624px;height:29px"></div>
<div class="a vl" style="left:454px;top:624px;height:29px"></div>
<div class="a vl" style="left:554px;top:624px;height:29px"></div>
<div class="a vl" style="left:674px;top:624px;height:29px"></div>
<div class="a vl" style="left:774px;top:624px;height:29px"></div>
<div class="a vl" style="left:1256px;top:624px;height:29px;width:2px;background:#c6c6c6"></div>
<div class="t p" style="left:15px;top:631px">Information</div>
<div class="t p" style="left:265px;top:631px">Einrichtung</div>
<div class="t p" style="left:465px;top:631px">ZR von</div>
<div class="t p" style="left:565px;top:631px">ZR bis</div>
<div class="t p" style="left:726px;top:631px">VBÄ</div>
<div class="t p" style="left:785px;top:631px">Inhalt</div>
<div class="a" style="left:4px;top:653px;width:1253px;height:1px;background:#ccc"></div>
<div class="t p" style="left:565px;top:659px;font-weight:bold">Summe VBÄ:</div>
<div class="t p" style="left:700px;top:659px;width:65px;text-align:right;font-weight:bold">0,00</div>
<div class="a" style="left:4px;top:678px;width:1253px;height:1px;background:#ccc"></div>
<div class="a" style="left:5px;top:680px;width:1253px;height:24px;background:#92ee7a"></div><div class="a" style="left:5px;top:704px;width:1253px;height:1px;background:#fbfbfd"></div><div class="a" style="left:5px;top:679px;width:1253px;height:1px;background:#fbfbfd"></div>
<div class="t" style="left:15px;top:685px">Ausgewählte Meldungszeile</div>
<div class="t" style="left:265px;top:685px">BD</div>
<div class="t" style="left:465px;top:685px">01.09.2023</div>
<div class="t" style="left:565px;top:685px">31.08.2024</div>
<div class="t" style="left:700px;top:685px;width:65px;text-align:right">0,00</div>
<div class="t" style="left:785px;top:685px">WH: 0.00</div>
<div class="a vl" style="left:1257px;top:172px;height:379px;background:#c6c6c6"></div>
</div></body></html>
